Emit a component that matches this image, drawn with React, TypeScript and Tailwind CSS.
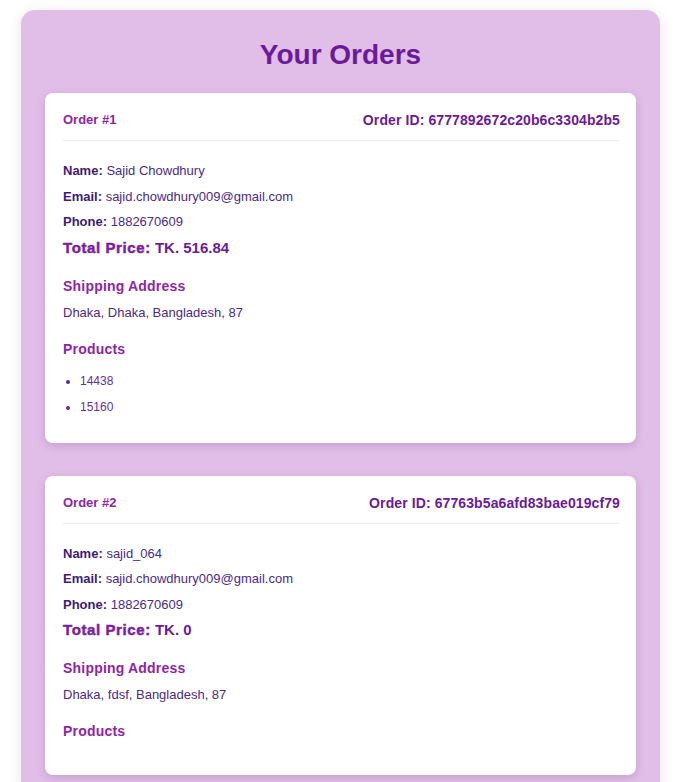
import React from 'react';

// Order shape used by the orders list
interface Order {
  id: string;
  name: string;
  email: string;
  phone: string;
  total: string;
  address: string;
  products: string[];
}

const orders: Order[] = [
  {
    id: '6777892672c20b6c3304b2b5',
    name: 'Sajid Chowdhury',
    email: 'sajid.chowdhury009@gmail.com',
    phone: '1882670609',
    total: '516.84',
    address: 'Dhaka, Dhaka, Bangladesh, 87',
    products: ['14438', '15160'],
  },
  {
    id: '67763b5a6afd83bae019cf79',
    name: 'sajid_064',
    email: 'sajid.chowdhury009@gmail.com',
    phone: '1882670609',
    total: '0',
    address: 'Dhaka, fdsf, Bangladesh, 87',
    products: [],
  },
];

interface OrderCardProps {
  order: Order;
  index: number;
}

const OrderCard: React.FC<OrderCardProps> = ({ order, index }) => {
  return (
    <div className="bg-white rounded-[8px] shadow-[0_3px_10px_rgba(90,20,120,0.18)] pl-[18px] pr-[16px] pt-[19px] pb-[17px]">
      {/* Header */}
      <div className="flex items-center justify-between pb-[12px] border-b border-[#ececec] leading-[16px]">
        <span className="text-[13px] font-semibold text-[#8e24aa]">Order #{index + 1}</span>
        <span className="text-[14px] font-bold text-[#6a1b9a] tracking-[0.1px]">Order ID: {order.id}</span>
      </div>

      {/* Customer details */}
      <div className="mt-[21px] flex flex-col gap-[7.5px] text-[13px] leading-[18px] text-[#4a2a8a]">
        <p>
          <span className="font-bold text-[#3d1a78]">Name:</span> {order.name}
        </p>
        <p>
          <span className="font-bold text-[#3d1a78]">Email:</span> {order.email}
        </p>
        <p>
          <span className="font-bold text-[#3d1a78]">Phone:</span> {order.phone}
        </p>
        <p className="text-[15px] font-bold text-[#6a1b9a]">
          <span className="text-[#7b1fa2] tracking-[0.6px] [-webkit-text-stroke:0.5px_#7b1fa2]">Total Price:</span> TK. {order.total}
        </p>
      </div>

      {/* Shipping */}
      <h3 className="mt-[20px] text-[14px] leading-[18px] font-bold text-[#8e24aa] tracking-[0.2px]">Shipping Address</h3>
      <p className="mt-[9px] text-[13px] leading-[18px] text-[#4a2a8a]">{order.address}</p>

      {/* Products */}
      <h3 className="mt-[18px] text-[14px] leading-[18px] font-bold text-[#8e24aa] tracking-[0.2px]">Products</h3>
      {order.products.length > 0 ? (
        <ul className="mt-[14px] mb-[10px] pl-[17px] list-disc flex flex-col gap-[8px] text-[12px] leading-[18px] text-[#6a2c9a] marker:text-[#5a2a8a]">
          {order.products.map(p => (
            <li key={p}>{p}</li>
          ))}
        </ul>
      ) : (
        <ul className="h-[18px]" />
      )}
    </div>
  );
};

const App: React.FC = () => {
  return (
    <div className="min-h-screen bg-white pt-[10px] pb-[20px] font-['Liberation_Sans',Arial,sans-serif]">
      <div className="ml-[21px] w-[639px] bg-[#e1bee7] rounded-[14px] shadow-[0_2px_14px_rgba(0,0,0,0.10)] px-[24px] pt-[29px] pb-[24px]">
        <h1 className="text-center text-[28px] leading-[32px] font-bold text-[#6a1b9a] mb-[22px]">Your Orders</h1>
        <div className="flex flex-col gap-[33px]">
          {orders.map((order, i) => (
            <OrderCard key={order.id} order={order} index={i} />
          ))}
        </div>
      </div>
    </div>
  );
};

export default App;
